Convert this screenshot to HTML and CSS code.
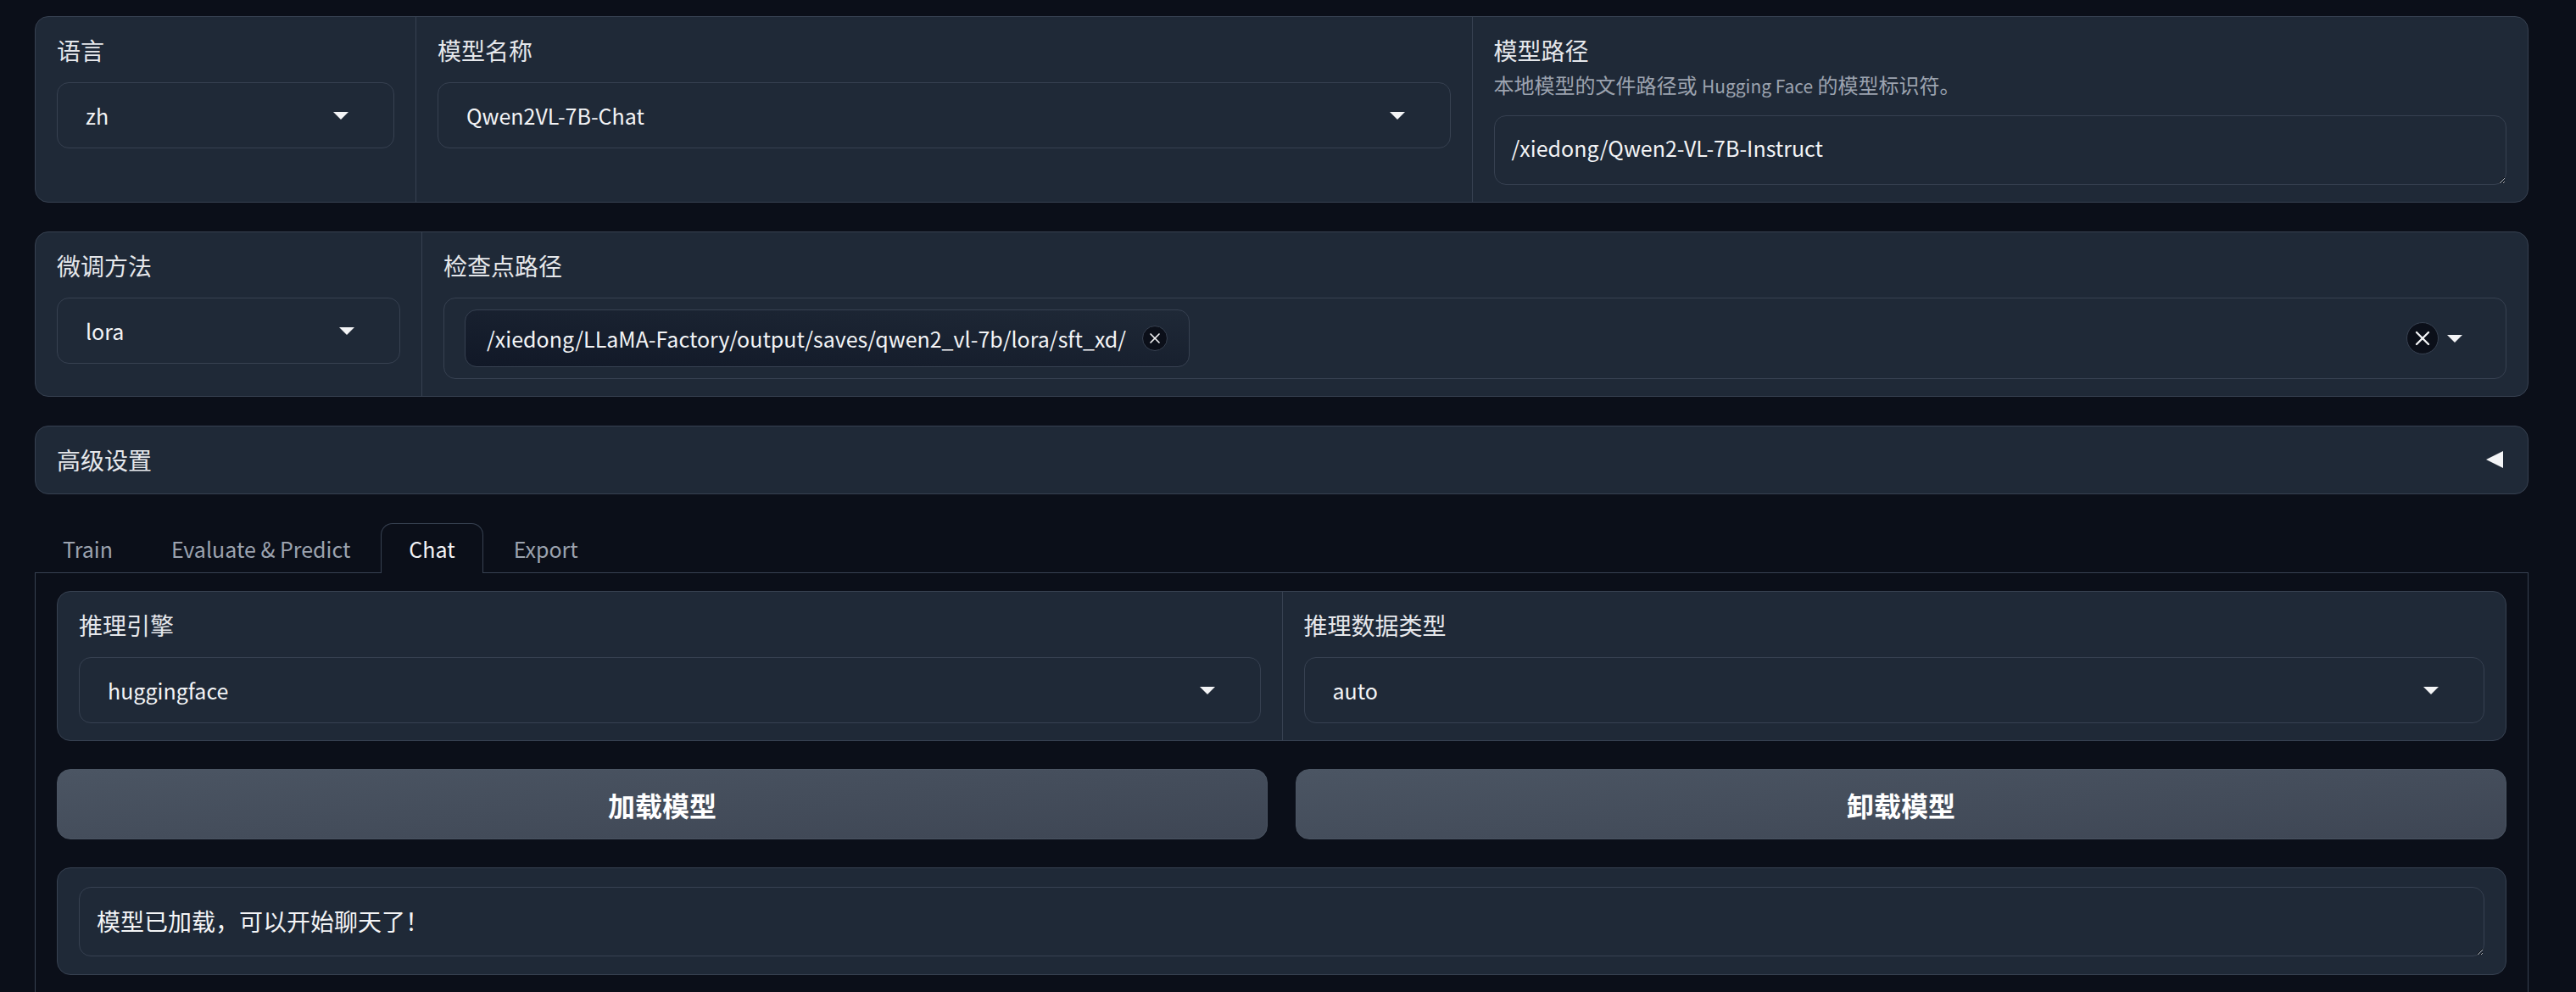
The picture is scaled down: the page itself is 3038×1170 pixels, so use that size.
FILE: index.html
```html
<!DOCTYPE html>
<html lang="zh">
<head>
  <meta charset="UTF-8">
  <meta name="viewport" content="width=device-width, initial-scale=1.0">
  <title>LLaMA Board</title>
  <link rel="stylesheet" href="styles.css">
</head>
<body>
  <div class="app">

    <div class="block row row-model">
      <div class="cell">
        <span class="label">语言</span>
        <div class="dropdown">
          <span class="latin">zh</span>
          <svg class="arrow" width="18" height="9" viewBox="0 0 18 9"><path d="M0 0h18l-9 9z"/></svg>
        </div>
      </div>
      <div class="cell">
        <span class="label">模型名称</span>
        <div class="dropdown">
          <span class="latin">Qwen2VL-7B-Chat</span>
          <svg class="arrow" width="18" height="9" viewBox="0 0 18 9"><path d="M0 0h18l-9 9z"/></svg>
        </div>
      </div>
      <div class="cell">
        <span class="label with-info">模型路径</span>
        <div class="info">本地模型的文件路径或 <span class="latin">Hugging Face</span> 的模型标识符。</div>
        <textarea class="textbox latin" rows="1">/xiedong/Qwen2-VL-7B-Instruct</textarea>
      </div>
    </div>

    <div class="block row row-adapter">
      <div class="cell">
        <span class="label">微调方法</span>
        <div class="dropdown">
          <span class="latin">lora</span>
          <svg class="arrow" width="18" height="9" viewBox="0 0 18 9"><path d="M0 0h18l-9 9z"/></svg>
        </div>
      </div>
      <div class="cell">
        <span class="label">检查点路径</span>
        <div class="multiselect">
          <div class="token">
            <span class="latin">/xiedong/LLaMA-Factory/output/saves/qwen2_vl-7b/lora/sft_xd/</span>
            <span class="remove small">
              <svg width="20" height="20" viewBox="0 0 24 24"><line x1="18" y1="6" x2="6" y2="18"/><line x1="6" y1="6" x2="18" y2="18"/></svg>
            </span>
          </div>
          <span class="remove all">
            <svg width="28" height="28" viewBox="0 0 24 24"><line x1="18" y1="6" x2="6" y2="18"/><line x1="6" y1="6" x2="18" y2="18"/></svg>
          </span>
          <svg class="arrow" width="18" height="9" viewBox="0 0 18 9"><path d="M0 0h18l-9 9z"/></svg>
        </div>
      </div>
    </div>

    <div class="block accordion">
      <span>高级设置</span>
      <svg width="20" height="20" viewBox="0 0 20 20"><path d="M20 0v20L0 10z"/></svg>
    </div>

    <div class="tabs">
      <div class="tab-nav">
        <button class="tab">Train</button>
        <button class="tab">Evaluate &amp; Predict</button>
        <button class="tab selected">Chat</button>
        <button class="tab">Export</button>
      </div>
      <div class="tab-panel">
        <div class="block row row-infer">
          <div class="cell">
            <span class="label">推理引擎</span>
            <div class="dropdown">
              <span class="latin">huggingface</span>
              <svg class="arrow" width="18" height="9" viewBox="0 0 18 9"><path d="M0 0h18l-9 9z"/></svg>
            </div>
          </div>
          <div class="cell">
            <span class="label">推理数据类型</span>
            <div class="dropdown">
              <span class="latin">auto</span>
              <svg class="arrow" width="18" height="9" viewBox="0 0 18 9"><path d="M0 0h18l-9 9z"/></svg>
            </div>
          </div>
        </div>

        <div class="btn-row">
          <button class="btn">加载模型</button>
          <button class="btn">卸载模型</button>
        </div>

        <div class="block output">
          <textarea class="textbox" rows="1">模型已加载，可以开始聊天了！</textarea>
        </div>
      </div>
    </div>

  </div>
</body>
</html>
```

FILE: styles.css
```css
* {
  box-sizing: border-box;
}
body {
  margin: 0;
  padding: 19px 56px 0 41px;
  background: #0b0f19;
  color: #f3f4f6;
  font-family: "Noto Sans CJK SC", "Noto Sans", sans-serif;
  font-size: 28px;
  overflow: hidden;
}
.latin {
  font-size: 25px;
}
.app {
  display: flex;
  flex-direction: column;
  gap: 34px;
}
.block {
  background: #1f2937;
  border: 1px solid #374151;
  border-radius: 16px;
}
.row {
  display: grid;
}
.row-model {
  grid-template-columns: 448px 1fr 1fr;
}
.row-adapter {
  grid-template-columns: 455px 1fr;
}
.row-infer {
  grid-template-columns: 1fr 1fr;
}
.cell {
  padding: 19px 25px 20px;
}
.cell + .cell {
  border-left: 1px solid #374151;
}
.label {
  display: block;
  line-height: 40px;
  color: #e5e7eb;
  margin-bottom: 18px;
}
.label.with-info {
  margin-bottom: 0;
}
.info {
  font-size: 24px;
  line-height: 30px;
  color: #9ca3af;
  margin: 6px 0 20px;
}
.info .latin {
  font-size: 21px;
}
.dropdown {
  display: flex;
  align-items: center;
  justify-content: space-between;
  height: 78px;
  padding: 0 53px 0 33px;
  border: 1px solid #374151;
  border-radius: 14px;
  background: #1f2937;
  line-height: 40px;
}
.arrow {
  fill: #f3f4f6;
  flex-shrink: 0;
}
.textbox {
  display: block;
  width: 100%;
  height: 82px;
  padding: 19px 20px 21px;
  border: 1px solid #374151;
  border-radius: 14px;
  background: #1f2937;
  color: #f3f4f6;
  font-family: inherit;
  font-size: 28px;
  line-height: 40px;
  resize: vertical;
  overflow: hidden;
  outline: none;
  color-scheme: dark;
}
.textbox.latin {
  padding-top: 17px;
  padding-bottom: 23px;
  font-size: 25px;
}
.multiselect {
  display: flex;
  align-items: center;
  height: 96px;
  padding: 0 51px 0 24px;
  border: 1px solid #374151;
  border-radius: 14px;
  background: #1f2937;
}
.token {
  display: flex;
  align-items: center;
  gap: 19px;
  height: 68px;
  padding: 0 25px;
  border: 1px solid #374151;
  border-radius: 14px;
  background: linear-gradient(to top right, #111827, #1f2937);
  white-space: nowrap;
}
.remove {
  display: flex;
  align-items: center;
  justify-content: center;
  border: 1px solid #374151;
  border-radius: 50%;
  background: #0b0f19;
}
.remove svg {
  stroke: #f3f4f6;
  stroke-width: 2;
  stroke-linecap: round;
}
.remove.small {
  width: 30px;
  height: 30px;
}
.remove.all {
  width: 38px;
  height: 38px;
  margin-left: auto;
  margin-right: 10px;
}
.accordion {
  display: flex;
  align-items: center;
  justify-content: space-between;
  padding: 19px 29px 20px 25px;
  line-height: 40px;
  color: #e5e7eb;
}
.accordion svg {
  fill: #f3f4f6;
}
.tab-nav {
  display: flex;
  gap: 3px;
  border-bottom: 1px solid #374151;
}
.tab {
  height: 58px;
  padding: 0 32px;
  margin-bottom: -1px;
  border: 1px solid transparent;
  border-bottom: none;
  border-radius: 14px 14px 0 0;
  background: none;
  color: #9ca3af;
  font-family: inherit;
  font-size: 25px;
  line-height: 40px;
}
.tab.selected {
  height: 59px;
  border-color: #374151;
  background: #0b0f19;
  color: #f3f4f6;
}
.tab-panel {
  display: flex;
  flex-direction: column;
  gap: 33px;
  padding: 21px 25px;
  border: 1px solid #374151;
  border-top: none;
}
.btn-row {
  display: grid;
  grid-template-columns: 1fr 1fr;
  gap: 33px;
}
.btn {
  height: 83px;
  border: 1px solid #4b5563;
  border-radius: 16px;
  background: linear-gradient(to bottom right, #4b5563, #3e4654);
  color: #ffffff;
  font: 700 32px "Noto Sans CJK SC", sans-serif;
}
.output {
  padding: 22px 25px 21px;
}
```
